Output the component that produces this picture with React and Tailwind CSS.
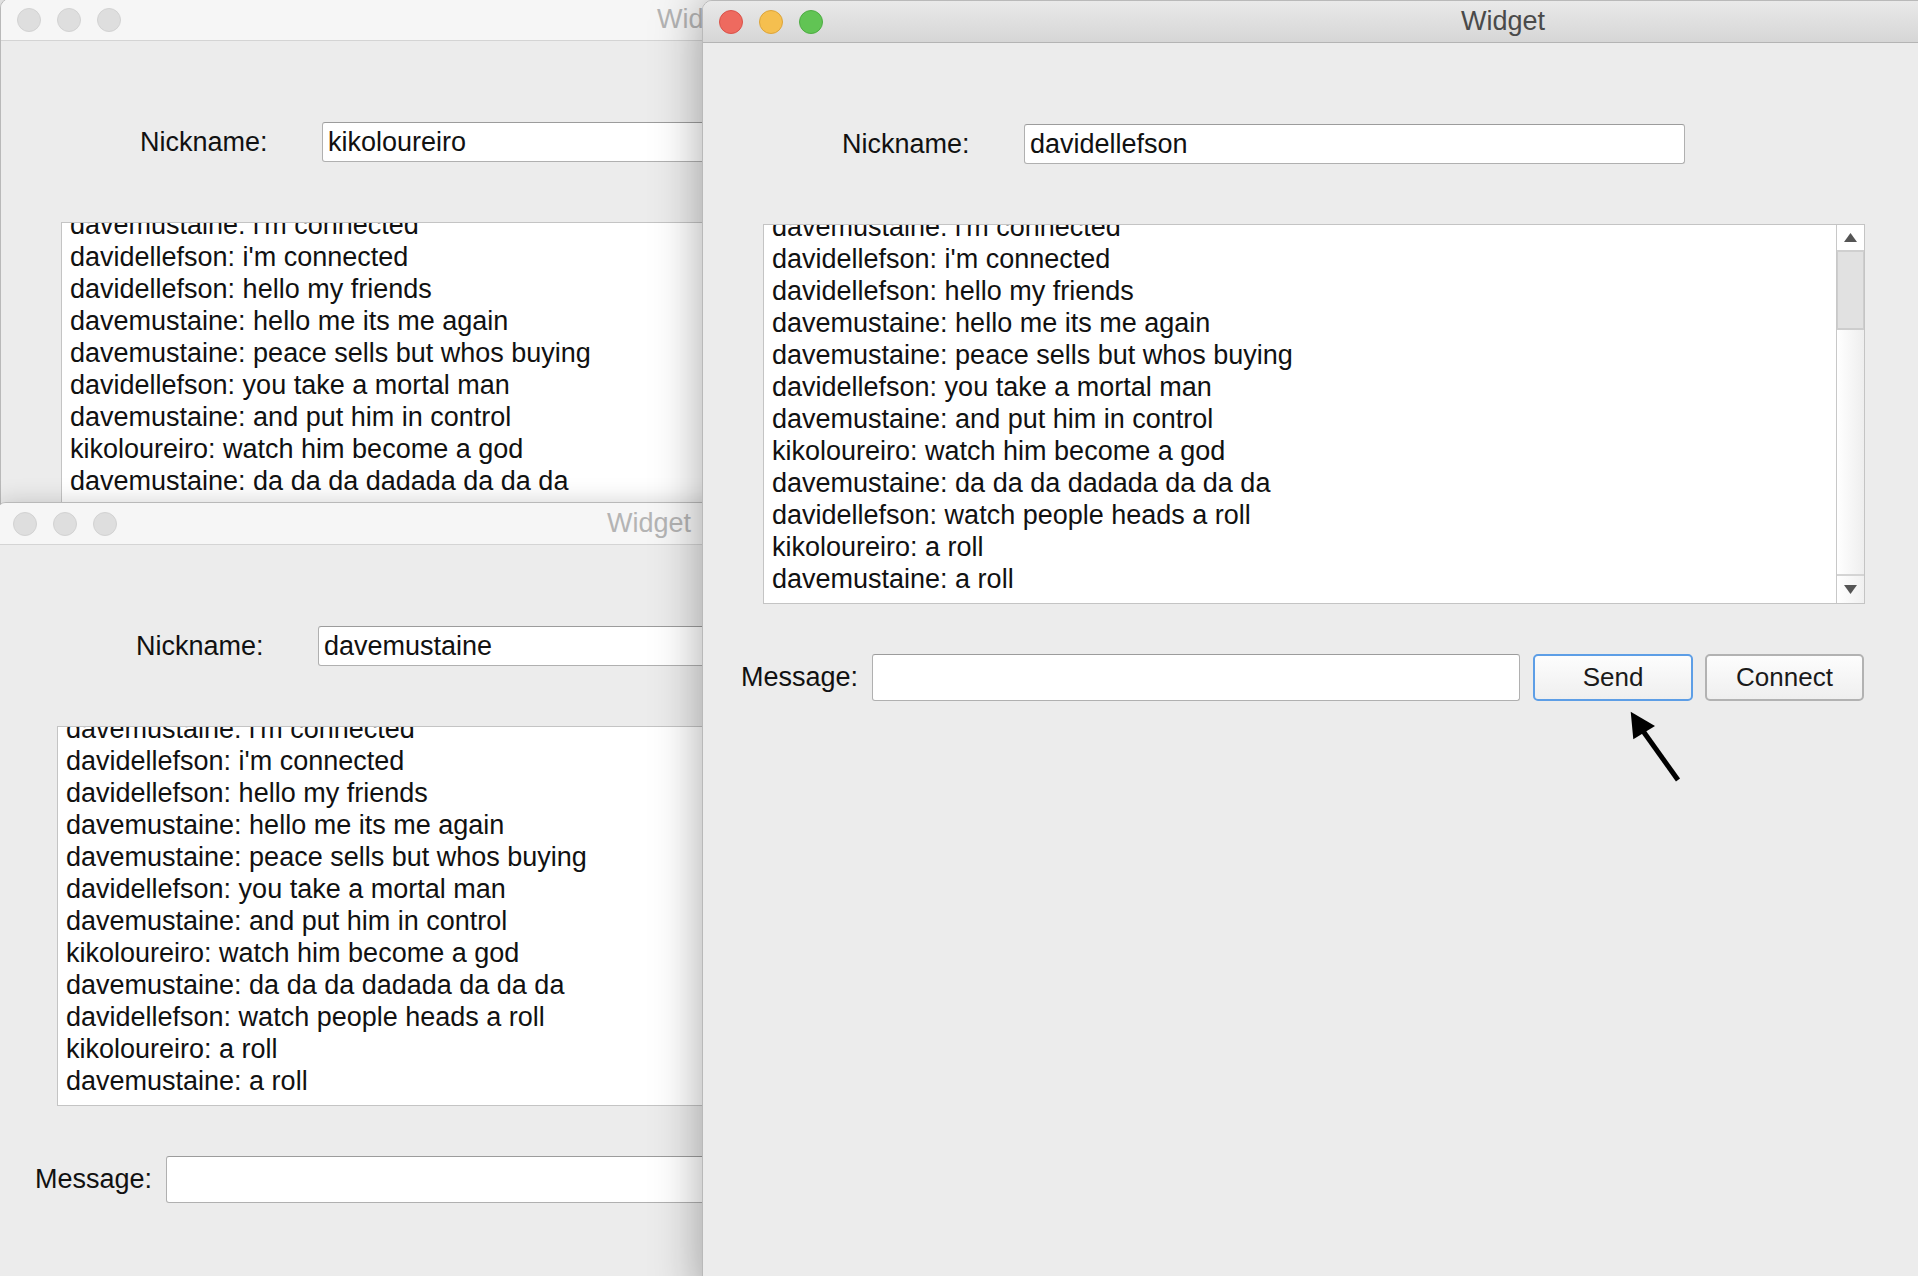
import React from 'react';

const LINES = [
  "davemustaine: i'm connected",
  "davidellefson: i'm connected",
  'davidellefson: hello my friends',
  'davemustaine: hello me its me again',
  'davemustaine: peace sells but whos buying',
  'davidellefson: you take a mortal man',
  'davemustaine: and put him in control',
  'kikoloureiro: watch him become a god',
  'davemustaine: da da da dadada da da da',
  'davidellefson: watch people heads a roll',
  'kikoloureiro: a roll',
  'davemustaine: a roll',
];

function Lights({ active }) {
  if (!active) {
    return (
      <div className="flex items-center gap-[16px]">
        <span className="w-[24px] h-[24px] rounded-full bg-[#dedede] border border-[#d2d2d2]" />
        <span className="w-[24px] h-[24px] rounded-full bg-[#dedede] border border-[#d2d2d2]" />
        <span className="w-[24px] h-[24px] rounded-full bg-[#dedede] border border-[#d2d2d2]" />
      </div>
    );
  }
  return (
    <div className="flex items-center gap-[16px]">
      <span className="w-[24px] h-[24px] rounded-full bg-[#ee6a5f] border border-[#d9534a]" />
      <span className="w-[24px] h-[24px] rounded-full bg-[#f5bf4f] border border-[#dca43a]" />
      <span className="w-[24px] h-[24px] rounded-full bg-[#61c454] border border-[#4ead43]" />
    </div>
  );
}

function TitleBar({ active }) {
  return (
    <div
      className={
        active
          ? 'grid grid-cols-[1fr_auto_1fr] items-center h-[42px] px-[16px] bg-gradient-to-b from-[#e9e9e9] to-[#d6d6d6] border-b border-[#b4b4b4]'
          : 'grid grid-cols-[1fr_auto_1fr] items-center h-[42px] px-[16px] bg-[#f6f6f6] border-b border-[#d4d4d4]'
      }
    >
      <Lights active={active} />
      <span className={active ? 'text-[27px] text-[#4a4a4a]' : 'text-[27px] text-[#b4b4b4]'}>Widget</span>
      <span />
    </div>
  );
}

function Scrollbar() {
  return (
    <div className="w-[28px] flex flex-col border-l border-[#c8c8c8] bg-white">
      <div className="h-[27px] flex items-center justify-center border-b-2 border-[#cfcfcf]">
        <svg width="13" height="9" viewBox="0 0 13 9"><path d="M6.5 0 L13 9 L0 9 Z" fill="#555" /></svg>
      </div>
      <div className="h-[78px] bg-[#e1e1e1] border-x border-b-2 border-[#cdcdcd]" />
      <div className="flex-1 bg-gradient-to-r from-white to-[#eeeeee]" />
      <div className="h-[29px] flex items-center justify-center border-t-2 border-[#d4d4d4] bg-gradient-to-r from-white to-[#f0f0f0]">
        <svg width="13" height="9" viewBox="0 0 13 9"><path d="M0 0 L13 0 L6.5 9 Z" fill="#555" /></svg>
      </div>
    </div>
  );
}

function Window({ className, active, nickname }) {
  return (
    <div className={'absolute flex flex-col rounded-t-[10px] overflow-hidden border border-[#b9b9b9] bg-[#ececec] ' + className}>
      <TitleBar active={active} />

      {/* nickname row */}
      <div className="flex items-center mt-[81px] pl-[139px]">
        <span className="w-[182px] text-[27px] text-[#111]">Nickname:</span>
        <div className="w-[661px] h-[40px] flex items-center pl-[5px] bg-white rounded-[3px] border border-[#b0b0b0] border-t-[#9c9c9c] text-[27px] text-[#111]">
          {nickname}
        </div>
      </div>

      {/* messages */}
      <div className="flex mt-[59px] ml-[60px] w-[1102px] h-[380px] bg-white border border-[#c4c4c4]">
        <div className="flex-1 overflow-hidden pl-[8px]">
          <div className="-mt-[14px]">
            {LINES.map((line, i) => (
              <div key={i} className="h-[32px] leading-[32px] text-[27px] text-[#111] whitespace-nowrap">
                {line}
              </div>
            ))}
          </div>
        </div>
        <Scrollbar />
      </div>

      {/* message row */}
      <div className="flex items-center mt-[50px] pl-[38px]">
        <span className="w-[131px] text-[27px] text-[#111]">Message:</span>
        <div className="w-[648px] h-[47px] bg-white rounded-[3px] border border-[#b0b0b0] border-t-[#9c9c9c]" />
        <button className="ml-[13px] w-[160px] h-[47px] rounded-[5px] border-2 border-[#5d9ee6] bg-gradient-to-b from-[#fdfdfd] to-[#efefef] text-[26px] text-[#1a1a1a]">
          Send
        </button>
        <button className="ml-[12px] w-[159px] h-[47px] rounded-[5px] border-2 border-[#b2b2b2] bg-gradient-to-b from-[#fdfdfd] to-[#efefef] text-[26px] text-[#1a1a1a]">
          Connect
        </button>
      </div>
    </div>
  );
}

export default function App() {
  return (
    <div className="relative w-[1918px] h-[1276px] overflow-hidden bg-[#ececec] font-['Liberation_Sans',Arial,sans-serif]">
      <Window className="left-0 top-[-2px] w-[1398px] h-[1000px] shadow-[0_0_20px_rgba(0,0,0,0.15)]" nickname="kikoloureiro" />
      <Window className="left-[-4px] top-[502px] w-[1306px] h-[900px] shadow-[0_0_24px_rgba(0,0,0,0.18)]" nickname="davemustaine" />
      <Window
        className="left-[702px] top-0 w-[1602px] h-[1300px] border-[#a8a8a8] shadow-[0_0_50px_rgba(0,0,0,0.35)]"
        active
        nickname="davidellefson"
      />

      {/* annotation arrow */}
      <svg className="absolute left-[1620px] top-[700px]" width="70" height="90" viewBox="0 0 70 90">
        <path d="M10.7 11.7 L13.3 39.3 L35 26 Z" fill="#000" />
        <line x1="23" y1="31" x2="58" y2="80" stroke="#000" strokeWidth="5" />
      </svg>
    </div>
  );
}
